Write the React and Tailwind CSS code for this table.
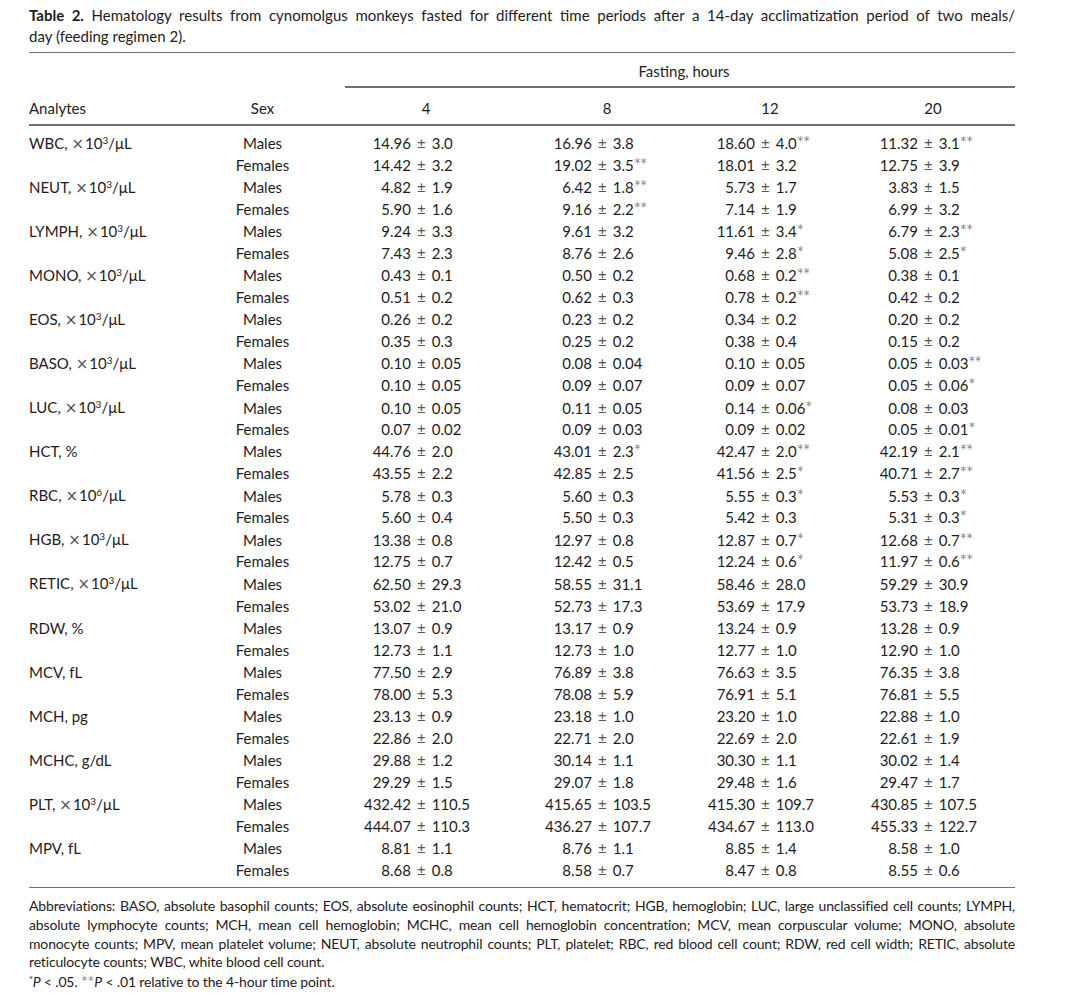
import React from 'react';

// analyte rows: [label, unit, males[4], females[4]] — "mean|sd" with trailing * marks
const ROWS = [
  ['WBC', 'x3', ['14.96|3.0', '16.96|3.8', '18.60|4.0**', '11.32|3.1**'], ['14.42|3.2', '19.02|3.5**', '18.01|3.2', '12.75|3.9']],
  ['NEUT', 'x3', ['4.82|1.9', '6.42|1.8**', '5.73|1.7', '3.83|1.5'], ['5.90|1.6', '9.16|2.2**', '7.14|1.9', '6.99|3.2']],
  ['LYMPH', 'x3', ['9.24|3.3', '9.61|3.2', '11.61|3.4*', '6.79|2.3**'], ['7.43|2.3', '8.76|2.6', '9.46|2.8*', '5.08|2.5*']],
  ['MONO', 'x3', ['0.43|0.1', '0.50|0.2', '0.68|0.2**', '0.38|0.1'], ['0.51|0.2', '0.62|0.3', '0.78|0.2**', '0.42|0.2']],
  ['EOS', 'x3', ['0.26|0.2', '0.23|0.2', '0.34|0.2', '0.20|0.2'], ['0.35|0.3', '0.25|0.2', '0.38|0.4', '0.15|0.2']],
  ['BASO', 'x3', ['0.10|0.05', '0.08|0.04', '0.10|0.05', '0.05|0.03**'], ['0.10|0.05', '0.09|0.07', '0.09|0.07', '0.05|0.06*']],
  ['LUC', 'x3', ['0.10|0.05', '0.11|0.05', '0.14|0.06*', '0.08|0.03'], ['0.07|0.02', '0.09|0.03', '0.09|0.02', '0.05|0.01*']],
  ['HCT', '%', ['44.76|2.0', '43.01|2.3*', '42.47|2.0**', '42.19|2.1**'], ['43.55|2.2', '42.85|2.5', '41.56|2.5*', '40.71|2.7**']],
  ['RBC', 'x6', ['5.78|0.3', '5.60|0.3', '5.55|0.3*', '5.53|0.3*'], ['5.60|0.4', '5.50|0.3', '5.42|0.3', '5.31|0.3*']],
  ['HGB', 'x3', ['13.38|0.8', '12.97|0.8', '12.87|0.7*', '12.68|0.7**'], ['12.75|0.7', '12.42|0.5', '12.24|0.6*', '11.97|0.6**']],
  ['RETIC', 'x3', ['62.50|29.3', '58.55|31.1', '58.46|28.0', '59.29|30.9'], ['53.02|21.0', '52.73|17.3', '53.69|17.9', '53.73|18.9']],
  ['RDW', '%', ['13.07|0.9', '13.17|0.9', '13.24|0.9', '13.28|0.9'], ['12.73|1.1', '12.73|1.0', '12.77|1.0', '12.90|1.0']],
  ['MCV', 'fL', ['77.50|2.9', '76.89|3.8', '76.63|3.5', '76.35|3.8'], ['78.00|5.3', '78.08|5.9', '76.91|5.1', '76.81|5.5']],
  ['MCH', 'pg', ['23.13|0.9', '23.18|1.0', '23.20|1.0', '22.88|1.0'], ['22.86|2.0', '22.71|2.0', '22.69|2.0', '22.61|1.9']],
  ['MCHC', 'g/dL', ['29.88|1.2', '30.14|1.1', '30.30|1.1', '30.02|1.4'], ['29.29|1.5', '29.07|1.8', '29.48|1.6', '29.47|1.7']],
  ['PLT', 'x3', ['432.42|110.5', '415.65|103.5', '415.30|109.7', '430.85|107.5'], ['444.07|110.3', '436.27|107.7', '434.67|113.0', '455.33|122.7']],
  ['MPV', 'fL', ['8.81|1.1', '8.76|1.1', '8.85|1.4', '8.58|1.0'], ['8.68|0.8', '8.58|0.7', '8.47|0.8', '8.55|0.6']],
];

const GRID = 'grid grid-cols-[160px_147px_181px_163px_163px_172px]';

function Analyte({ name, unit }) {
  if (unit === 'x3' || unit === 'x6') {
    return (
      <span>
        {name}, <span className="font-['DejaVu_Sans',sans-serif] text-[#555] mr-[1px]">×</span>10<sup className="text-[10px]">{unit === 'x3' ? '3' : '6'}</sup>/μL
      </span>
    );
  }
  return <span>{name}, {unit}</span>;
}

function Value({ v }) {
  const [mean, rest] = v.split('|');
  const stars = rest.match(/\*+$/)?.[0] || '';
  const sd = rest.replace(/\*+$/, '');
  return (
    <div className="flex whitespace-nowrap">
      <span className="w-[75px] shrink-0 text-right">{mean}</span>
      <span className="ml-[6px] text-[#555]">±</span>
      <span className="ml-[6px]">{sd}</span>
      {stars && <span className="text-[#8a8a8a] text-[17px] leading-[22px] tracking-[-1px]">{stars}</span>}
    </div>
  );
}

const Rule = ({ className = '' }) => <div className={`h-[1.5px] bg-[#6f6f6f] ${className}`} />;

export default function App() {
  return (
    <div className="w-[1080px] h-[996px] bg-white text-[#1f1b1c] font-[Lato,sans-serif] px-[29px] pt-[5px]">
      <div className="w-[986px] text-[15px] leading-[21px]">
        <div className="text-justify [text-align-last:justify]">
          <span className="font-bold">Table 2.</span> Hematology results from cynomolgus monkeys fasted for different time periods after a 14-day acclimatization period of two meals/
        </div>
        <div>day (feeding regimen 2).</div>
      </div>

      <div className="w-[986px] text-[15px] leading-[22px]">
        <Rule className="mt-[4.5px]" />

        {/* spanner header */}
        <div className={`${GRID} mt-[7px]`}>
          <div className="col-start-3 col-span-4 pl-[9px]">
            <div className="text-center pl-[8px]">Fasting, hours</div>
            <Rule className="mt-[4px]" />
          </div>
        </div>

        <div className={`${GRID} mt-[9.5px]`}>
          <div>Analytes</div>
          <div className="text-center">Sex</div>
          {['4', '8', '12', '20'].map((h) => (
            <div key={h}><div className="w-[180px] text-center">{h}</div></div>
          ))}
        </div>
        <Rule className="mt-[5px]" />

        <div className="pt-[6px] pb-[5.5px]">
          {ROWS.map(([name, unit, males, females]) => (
            <React.Fragment key={name}>
              <div className={`${GRID} h-[22.06px] items-center`}>
                <div className="whitespace-nowrap"><Analyte name={name} unit={unit} /></div>
                <div className="text-center">Males</div>
                {males.map((v, i) => <Value key={i} v={v} />)}
              </div>
              <div className={`${GRID} h-[22.06px] items-center`}>
                <div />
                <div className="text-center">Females</div>
                {females.map((v, i) => <Value key={i} v={v} />)}
              </div>
            </React.Fragment>
          ))}
        </div>
        <Rule />
      </div>

      <div className="w-[986px] mt-[9px] text-[14px] leading-[18.75px] tracking-[-0.15px]">
        <div className="text-justify [text-align-last:justify]">
          Abbreviations: BASO, absolute basophil counts; EOS, absolute eosinophil counts; HCT, hematocrit; HGB, hemoglobin; LUC, large unclassified cell counts; LYMPH,
        </div>
        <div className="text-justify [text-align-last:justify]">
          absolute lymphocyte counts; MCH, mean cell hemoglobin; MCHC, mean cell hemoglobin concentration; MCV, mean corpuscular volume; MONO, absolute
        </div>
        <div className="text-justify [text-align-last:justify]">
          monocyte counts; MPV, mean platelet volume; NEUT, absolute neutrophil counts; PLT, platelet; RBC, red blood cell count; RDW, red cell width; RETIC, absolute
        </div>
        <div>reticulocyte counts; WBC, white blood cell count.</div>
        <div>
          <sup className="text-[9px]">*</sup><i>P</i> &lt; .05. <span className="text-[#8a8a8a] text-[16px] leading-[18px]">**</span><i>P</i> &lt; .01 relative to the 4-hour time point.
        </div>
      </div>
    </div>
  );
}
